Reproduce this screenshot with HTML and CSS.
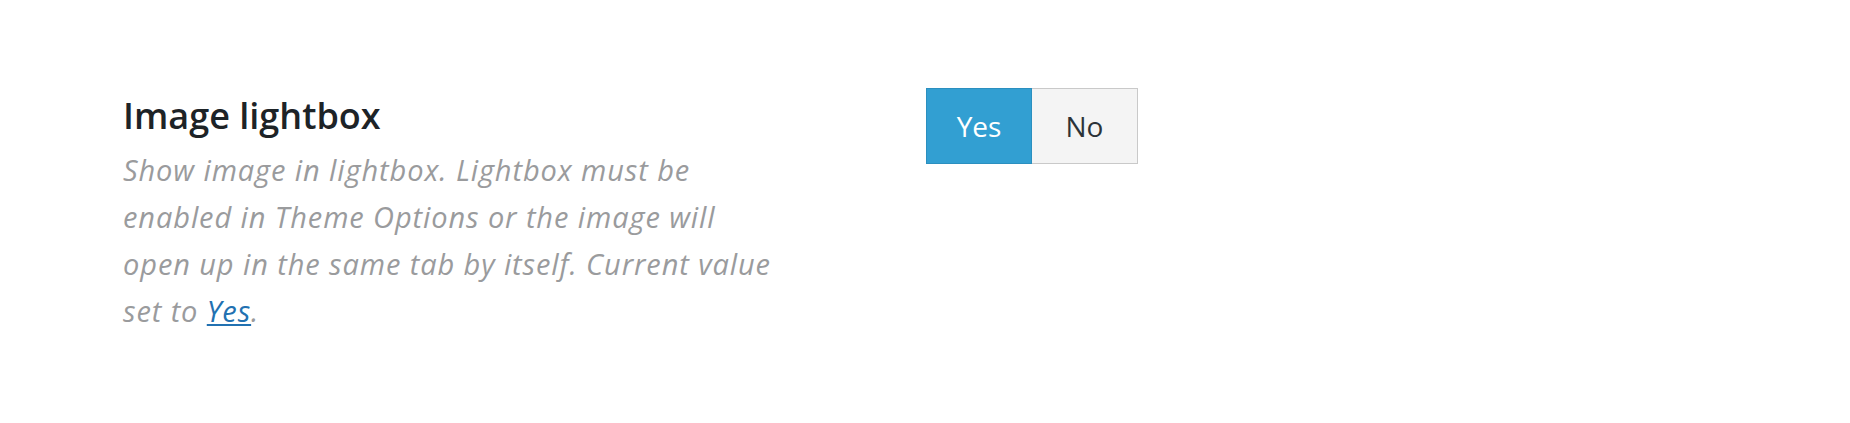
FILE: index.html
```html
<!DOCTYPE html>
<html lang="en">
<head>
  <meta charset="UTF-8" />
  <title>Image lightbox</title>
  <link rel="stylesheet" href="styles.css">
</head>
<body>
  <div class="setting">
    <div class="setting-info">
      <h3 class="setting-title">Image lightbox</h3>
      <p class="setting-desc">Show image in lightbox. Lightbox must be enabled in Theme Options or the image will open up in the same tab by itself. Current value set to <a href="#">Yes</a>.</p>
    </div>
    <div class="toggle">
      <button class="toggle-btn active">Yes</button>
      <button class="toggle-btn">No</button>
    </div>
  </div>
</body>
</html>
```

FILE: styles.css
```css
body {
  margin: 0;
  background: #fff;
  font-family: "Open Sans", "Noto Sans", sans-serif;
}
.setting {
  display: flex;
  align-items: flex-start;
  padding: 88px 0 0 123px;
}
.setting-info {
  width: 650px;
  margin-right: 153px;
}
.setting-title {
  margin: 6px 0 0;
  font-size: 36px;
  font-weight: 600;
  line-height: 44px;
  color: #1d2327;
}
.setting-desc {
  margin: 8px 0 0;
  font-size: 29px;
  font-style: italic;
  letter-spacing: 0.9px;
  line-height: 47px;
  color: #9a9b9d;
}
.setting-desc a {
  color: #2271b1;
}
.toggle {
  display: flex;
}
.toggle-btn {
  width: 106px;
  height: 76px;
  padding: 0;
  font-family: inherit;
  font-size: 28px;
  color: #2c3338;
  background: #f4f4f4;
  border: 1px solid #c9c9c9;
  cursor: pointer;
}
.toggle-btn.active {
  color: #fff;
  background: #329fd2;
  border-color: #2b8fbf;
}
.toggle-btn + .toggle-btn {
  border-left: none;
}
```
